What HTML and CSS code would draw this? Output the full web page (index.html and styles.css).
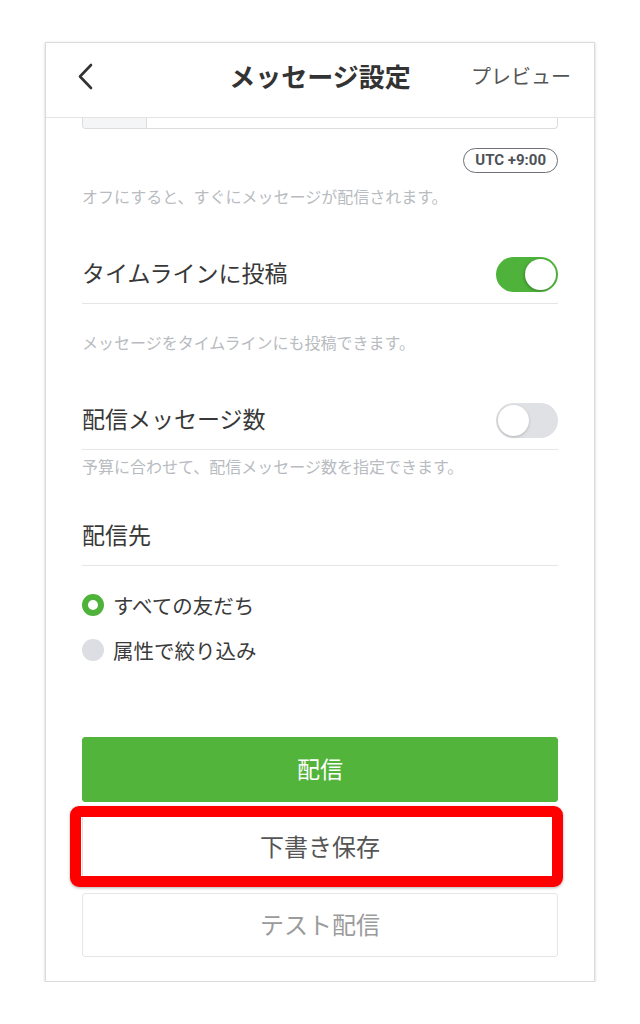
FILE: index.html
```html
<!DOCTYPE html>
<html lang="ja">
  <head>
    <meta charset="UTF-8" />
    <meta name="viewport" content="width=device-width, initial-scale=1.0" />
    <title>メッセージ設定</title>
    <link rel="stylesheet" href="styles.css">
  </head>

  <body>
    <div class="phone">
      <div class="header">
        <div class="back">
          <svg width="16" height="27" viewBox="0 0 16 27">
            <polyline points="14,2 3,13.5 14,25" fill="none" stroke="#333" stroke-width="2.6" stroke-linecap="round" stroke-linejoin="round" />
          </svg>
        </div>
        <div class="title">メッセージ設定</div>
        <div class="preview">プレビュー</div>
      </div>

      <div class="content">
        <!-- 日時入力（上にスクロール済み） -->
        <div class="date-input">
          <span class="unit"></span>
        </div>
        <div class="tz-row">
          <span class="tz">UTC +9:00</span>
        </div>
        <p class="hint hint-first">オフにすると、すぐにメッセージが配信されます。</p>

        <div class="setting">
          <span class="label">タイムラインに投稿</span>
          <span class="switch on"><i></i></span>
        </div>
        <p class="hint hint-gap">メッセージをタイムラインにも投稿できます。</p>

        <div class="setting">
          <span class="label">配信メッセージ数</span>
          <span class="switch"><i></i></span>
        </div>
        <p class="hint hint-tight">予算に合わせて、配信メッセージ数を指定できます。</p>

        <div class="setting setting-target">
          <span class="label">配信先</span>
        </div>

        <ul class="radios">
          <li><span class="radio checked"></span>すべての友だち</li>
          <li><span class="radio"></span>属性で絞り込み</li>
        </ul>

        <div class="buttons">
          <button class="btn btn-send">配信</button>
          <div class="mark">
            <button class="btn btn-draft">下書き保存</button>
          </div>
          <button class="btn btn-test">テスト配信</button>
        </div>
      </div>
    </div>
  </body>
</html>
```

FILE: styles.css
```css
* {
  margin: 0;
  padding: 0;
  box-sizing: border-box;
}

body {
  background: #ffffff;
  font-family: "Noto Sans CJK JP", "Noto Sans", sans-serif;
  color: #333333;
}

li {
  list-style: none;
}

.phone {
  width: 550px;
  margin: 42px 0 0 45px;
  background: #ffffff;
  border: 1px solid #dadada;
  box-shadow: 0 1px 3px rgba(0, 0, 0, 0.18);
}

/* ヘッダー */
.header {
  height: 75px;
  display: grid;
  grid-template-columns: 1fr auto 1fr;
  align-items: center;
  padding-bottom: 10px;
  border-bottom: 1px solid #e4e4e4;
}

.back {
  padding-left: 31px;
  display: flex;
  align-items: center;
  padding-top: 3px;
}

.title {
  font-size: 26px;
  font-weight: bold;
  color: #333333;
}

.preview {
  justify-self: end;
  padding-right: 23px;
  font-size: 20px;
  color: #555555;
}

.content {
  padding: 0 36px 24px;
}

.date-input {
  height: 11px;
  display: flex;
  border: 1px solid #dcdcdc;
  border-top: none;
  border-radius: 0 0 4px 4px;
}

.date-input .unit {
  width: 64px;
  background: #f4f5f7;
  border-right: 1px solid #dcdcdc;
  border-radius: 0 0 0 4px;
}

.tz-row {
  display: flex;
  justify-content: flex-end;
  margin-top: 19px;
}

.tz {
  height: 25px;
  line-height: 22px;
  padding: 0 11px;
  border: 1.5px solid #6d7177;
  border-radius: 13px;
  font-family: Roboto, "Liberation Sans", sans-serif;
  font-size: 15px;
  font-weight: bold;
  color: #4d5258;
}

.hint {
  font-size: 16px;
  line-height: 20px;
  color: #b8bbc0;
}

.hint-first {
  margin-top: 13px;
}

.hint-gap {
  margin-top: 28px;
}

.hint-tight {
  margin-top: 6px;
}

/* 設定行 */
.setting {
  display: flex;
  align-items: center;
  justify-content: space-between;
  padding: 11px 0;
  margin-top: 40px;
  border-bottom: 1px solid #e6e6e6;
}

.label {
  font-size: 23px;
  line-height: 31px;
  padding-bottom: 4px;
  color: #383838;
}

.setting-target {
  margin-top: 32px;
}

.switch {
  width: 62px;
  height: 35px;
  border-radius: 18px;
  background: #dfe1e5;
  padding: 2px;
  display: flex;
}

.switch i {
  width: 31px;
  height: 31px;
  border-radius: 50%;
  background: #ffffff;
  box-shadow: 0 1px 3px rgba(0, 0, 0, 0.2);
}

.switch.on {
  background: #4fb33b;
  justify-content: flex-end;
}

.switch.on i {
  box-shadow: -1px 1px 3px rgba(0, 0, 0, 0.25);
}

/* ラジオボタン */
.radios {
  margin-top: 25px;
  display: flex;
  flex-direction: column;
  gap: 17px;
}

.radios li {
  display: flex;
  align-items: center;
  height: 28px;
  font-size: 20.5px;
  color: #3a3a3a;
}

.radio {
  width: 22px;
  height: 22px;
  border-radius: 50%;
  background: #dcdee3;
  margin-right: 9px;
}

.radio.checked {
  background: #ffffff;
  border: 6px solid #4fb33b;
}

/* ボタン */
.buttons {
  margin-top: 73px;
  display: flex;
  flex-direction: column;
}

.btn {
  width: 100%;
  height: 65px;
  font-family: "Noto Sans CJK JP", sans-serif;
  font-size: 24px;
  border-radius: 3px;
  background: #ffffff;
  border: 1px solid #dedede;
  padding-bottom: 3px;
}

.btn-send {
  background: #52b43a;
  border-color: #52b43a;
  color: #ffffff;
  font-size: 23px;
}

.mark {
  position: relative;
  margin-top: 13px;
}

.mark .btn-draft {
  display: block;
  height: 64px;
  color: #555555;
}

/* 強調枠 */
.mark::after {
  content: "";
  position: absolute;
  top: -9px;
  left: -12px;
  right: -5px;
  bottom: -8px;
  border: 11px solid #ff0000;
  border-radius: 9px;
  box-shadow: 0 1px 3px rgba(0, 0, 0, 0.3);
}

.btn-test {
  margin-top: 14px;
  height: 64px;
  color: #9b9b9b;
  border-color: #e6e6e6;
}
```
